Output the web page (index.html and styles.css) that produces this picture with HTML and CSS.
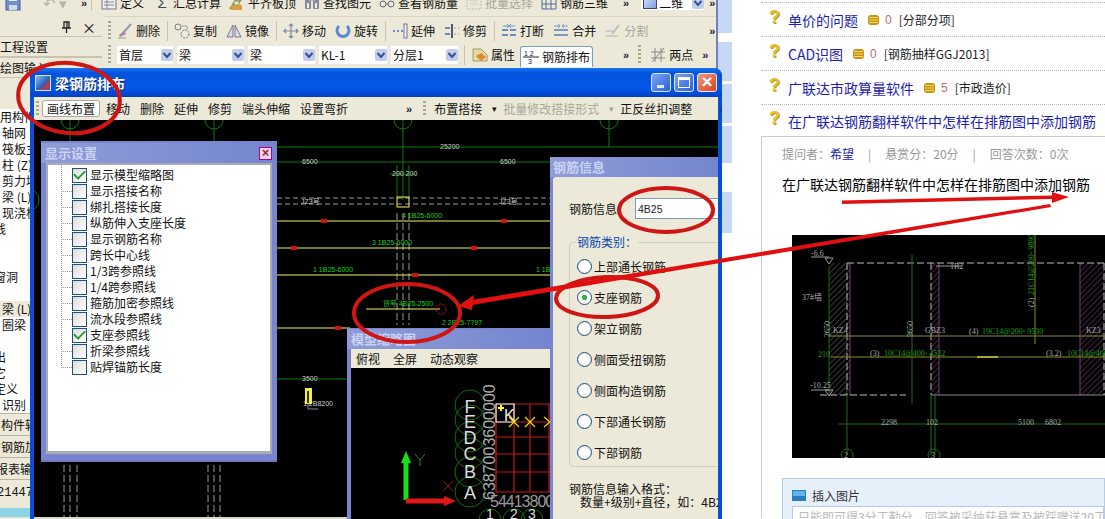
FILE: index.html
```html
<!DOCTYPE html>
<html lang="zh">
<head>
<meta charset="utf-8">
<title>梁钢筋排布</title>
<link rel="stylesheet" href="styles.css">
</head>
<body>
<svg class="defs" aria-hidden="true">
  <symbol id="i-save" viewBox="0 0 16 16"><rect x="1" y="0" width="14" height="15" fill="#6f8fd0" stroke="#4a5a90"/><rect x="4" y="0" width="8" height="6" fill="#eef"/><rect x="4" y="10" width="8" height="5" fill="#cdd"/></symbol>
  <symbol id="i-def" viewBox="0 0 16 16"><rect x="1" y="1" width="14" height="13" fill="#eee" stroke="#778"/><path d="M3 4h10M3 7h10M3 10h10M6 1v13" stroke="#889" fill="none"/></symbol>
  <symbol id="i-level" viewBox="0 0 16 16"><path d="M1 14l6-9 3 2 4-5" stroke="#887" fill="none" stroke-width="2"/><rect x="2" y="10" width="11" height="5" fill="#d9a040"/><rect x="5" y="6" width="5" height="4" fill="#f2e6a0" stroke="#997"/></symbol>
  <symbol id="i-find" viewBox="0 0 16 16"><rect x="1" y="4" width="6" height="10" fill="#889" rx="1"/><rect x="9" y="4" width="6" height="10" fill="#889" rx="1"/><rect x="5" y="1" width="6" height="5" fill="#aab"/><rect x="3" y="8" width="2" height="5" fill="#eee"/><rect x="11" y="8" width="2" height="5" fill="#eee"/></symbol>
  <symbol id="i-glass" viewBox="0 0 16 16"><circle cx="4" cy="9" r="3" fill="none" stroke="#667"/><circle cx="12" cy="9" r="3" fill="none" stroke="#667"/><path d="M7 9h2" stroke="#667"/></symbol>
  <symbol id="i-batch" viewBox="0 0 16 16"><rect x="1" y="2" width="14" height="12" fill="none" stroke="#bbb" stroke-dasharray="2 1"/><path d="M4 6h8M4 9h8" stroke="#ccc"/></symbol>
  <symbol id="i-3d" viewBox="0 0 16 16"><path d="M1 4h14v10H1zM5 4v10M10 4v10M1 9h14M3 1h12" fill="none" stroke="#556a9a"/></symbol>
  <symbol id="i-del" viewBox="0 0 16 16"><path d="M14 1L6 10" stroke="#99a" stroke-width="2"/><path d="M7 8l-5 4 1 2 6-3z" fill="#b080a0"/><path d="M1 15h8" stroke="#999"/></symbol>
  <symbol id="i-copy" viewBox="0 0 16 16"><circle cx="4" cy="4" r="3" fill="none" stroke="#778"/><circle cx="11" cy="11" r="4" fill="none" stroke="#778" stroke-dasharray="2 1"/><path d="M8 3h5v4" fill="none" stroke="#99a"/></symbol>
  <symbol id="i-mirror" viewBox="0 0 16 16"><path d="M7 2v12H1zM9 2v12h6z" fill="#dde" stroke="#778"/></symbol>
  <symbol id="i-move" viewBox="0 0 16 16"><path d="M8 1v14M1 8h14M6 3l2-2 2 2M6 13l2 2 2-2M3 6L1 8l2 2M13 6l2 2-2 2" fill="none" stroke="#7888a8" stroke-width="1.2"/></symbol>
  <symbol id="i-rot" viewBox="0 0 16 16"><path d="M4 3a6 6 0 1 0 8 0" fill="none" stroke="#5a88cc" stroke-width="3"/></symbol>
  <symbol id="i-ext" viewBox="0 0 16 16"><path d="M1 8h2M5 8h2M9 8h2" stroke="#6a8ac0" stroke-width="2"/><rect x="12" y="1" width="3" height="14" fill="#eef" stroke="#778"/></symbol>
  <symbol id="i-trim" viewBox="0 0 16 16"><path d="M1 5h5M1 11h5" stroke="#6a8ac0" stroke-width="2"/><path d="M8 1v14" stroke="#556" stroke-width="2"/><path d="M10 5h2M14 5h1M10 11h2M14 11h1" stroke="#99b"/></symbol>
  <symbol id="i-brk" viewBox="0 0 16 16"><path d="M1 12h6M9 12h6M1 7h6M9 7h6" stroke="#6a8ac0" stroke-width="2"/><path d="M2 3h5M6 1l2 2-2 2M14 3H9M10 1L8 3l2 2" fill="none" stroke="#6a9ad0"/></symbol>
  <symbol id="i-mrg" viewBox="0 0 16 16"><path d="M1 12h14M1 7h14" stroke="#7a9ac0" stroke-width="2"/><path d="M1 3h5M5 1l2 2-2 2M15 3h-5M11 1L9 3l2 2" fill="none" stroke="#7a9ad0"/></symbol>
  <symbol id="i-split" viewBox="0 0 16 16"><path d="M1 13h12M1 8h7" stroke="#ccc" stroke-width="2"/><path d="M14 2L7 11" stroke="#bbb" stroke-width="2"/></symbol>
  <symbol id="i-prop" viewBox="0 0 16 16"><path d="M1 2h8l6 6v6H1z" fill="#e8d8a0" stroke="#aa9966"/><path d="M4 9l5-3 5 4-5 4z" fill="#d88a30"/></symbol>
  <symbol id="i-two" viewBox="0 0 16 16"><path d="M1 5h14M1 11h14M5 1v14M11 1v14M2 15L14 1" fill="none" stroke="#8a8a8a"/></symbol>
  <symbol id="i-coin" viewBox="0 0 11 10"><rect x="0" y="0" width="11" height="10" rx="3" fill="#c79410"/><path d="M1 2.500h9M1 5h9M1 7.500h9" stroke="#f3dc72" stroke-width="1.2"/></symbol>
  <symbol id="i-arrow" viewBox="0 0 12 12"><rect width="12" height="12" rx="2" fill="#c0cdee"/><path d="M2.500 4L6 8l3.500-4" fill="none" stroke="#37508c" stroke-width="2"/></symbol>
  <symbol id="i-pin" viewBox="0 0 9 12"><path d="M2 1h5v6H2zM0 7h9M4.500 7v5M5 1v6" fill="none" stroke="#222" stroke-width="1.3"/></symbol>
</svg>

<div class="app">
  <div class="tb tb1">
    <svg class="ic"><use href="#i-save"/></svg>
    <span class="undo">↶ ▾</span>
    <span class="more more-a">»</span>
    <span class="sep sep-a"></span>
    <span class="it"><svg class="ic"><use href="#i-def"/></svg>定义</span>
    <span class="it it-s"><span class="ic sig">Σ</span>汇总计算</span>
    <span class="it"><svg class="ic"><use href="#i-level"/></svg>平齐板顶</span>
    <span class="it"><svg class="ic"><use href="#i-find"/></svg>查找图元</span>
    <span class="it"><svg class="ic"><use href="#i-glass"/></svg>查看钢筋量</span>
    <span class="it off"><svg class="ic"><use href="#i-batch"/></svg>批量选择</span>
    <span class="it"><svg class="ic"><use href="#i-3d"/></svg>钢筋三维</span>
    <span class="more more-b">»</span>
    <span class="combo combo-2d"><span class="swatch"></span>二维<svg class="arr"><use href="#i-arrow"/></svg></span>
    <span class="more">»</span>
  </div>
  <div class="main">
    <aside class="side">
      <div class="side-head"><svg class="pin"><use href="#i-pin"/></svg><span>×</span></div>
      <div class="side-tab">工程设置</div>
      <div class="side-tab">绘图输入</div>
      <div class="side-gap"></div>
      <ul class="tree">
        <li>用构件</li><li class="in">轴网</li><li class="in">筏板主</li><li class="in">柱 (Z)</li>
        <li class="in">剪力墙</li><li class="in">梁 (L)</li><li class="in">现浇板</li><li class="cut">线</li>
        <li></li><li></li><li class="cut">窗洞</li><li></li>
        <li class="in hi">梁 (L)</li><li class="in">圈梁</li><li></li>
        <li class="cut">出</li><li class="cut">它</li><li class="cut">定义</li><li class="in">识别</li>
      </ul>
      <div class="side-btn">构件转</div>
      <div class="side-btn">钢筋加</div>
      <div class="side-btn cut">报表输</div>
      <div class="side-btn num">21447</div>
      <div class="side-teal"></div>
    </aside>
    <div class="bars">
      <div class="tb tb2">
        <span class="grip"></span>
        <span class="it"><svg class="ic"><use href="#i-del"/></svg>删除</span><span class="sep"></span>
        <span class="it"><svg class="ic"><use href="#i-copy"/></svg>复制</span>
        <span class="it"><svg class="ic"><use href="#i-mirror"/></svg>镜像</span><span class="sep"></span>
        <span class="it"><svg class="ic"><use href="#i-move"/></svg>移动</span>
        <span class="it"><svg class="ic"><use href="#i-rot"/></svg>旋转</span><span class="sep"></span>
        <span class="it"><svg class="ic"><use href="#i-ext"/></svg>延伸</span>
        <span class="it"><svg class="ic"><use href="#i-trim"/></svg>修剪</span><span class="sep"></span>
        <span class="it"><svg class="ic"><use href="#i-brk"/></svg>打断</span>
        <span class="it"><svg class="ic"><use href="#i-mrg"/></svg>合并</span>
        <span class="it off"><svg class="ic"><use href="#i-split"/></svg>分割</span>
        <span class="more more-end">»</span>
      </div>
      <div class="tb tb3">
        <span class="grip"></span>
        <span class="combo c1">首层<svg class="arr"><use href="#i-arrow"/></svg></span>
        <span class="combo c2">梁<svg class="arr"><use href="#i-arrow"/></svg></span>
        <span class="combo c2">梁<svg class="arr"><use href="#i-arrow"/></svg></span>
        <span class="combo c2 c-kl">KL-1<svg class="arr"><use href="#i-arrow"/></svg></span>
        <span class="combo c2">分层1<svg class="arr"><use href="#i-arrow"/></svg></span>
        <span class="sep sep-c"></span>
        <span class="it it-p"><svg class="ic"><use href="#i-prop"/></svg>属性</span>
        <span class="it active"><svg class="ic" viewBox="0 0 16 16"><text x="1" y="7" class="frac">1 2</text><path d="M0 8h16" stroke="#223"/><text x="5" y="15" class="frac">3</text></svg>钢筋排布</span>
        <span class="more more-c">»</span>
        <span class="grip grip-c"></span>
        <span class="it"><svg class="ic"><use href="#i-two"/></svg>两点</span>
        <span class="more">»</span>
      </div>
    </div>
  </div>
</div>

<div class="strip"></div>

<main class="web">
  <div class="q-row"><span class="mark">?</span><a class="q-link">单价的问题</a><svg class="coin"><use href="#i-coin"/></svg><span class="pts">0</span><span class="tag">[分部分项]</span></div>
  <div class="q-row"><span class="mark">?</span><a class="q-link">CAD识图</a><svg class="coin"><use href="#i-coin"/></svg><span class="pts">0</span><span class="tag">[钢筋抽样GGJ2013]</span></div>
  <div class="q-row"><span class="mark">?</span><a class="q-link">广联达市政算量软件</a><svg class="coin"><use href="#i-coin"/></svg><span class="pts">5</span><span class="tag">[市政造价]</span></div>
  <div class="q-row q-last"><span class="mark">?</span><a class="q-link">在广联达钢筋翻样软件中怎样在排筋图中添加钢筋</a></div>
  <section class="q-box">
    <p class="meta">提问者：<b>希望</b><i>|</i>悬赏分：20分<i>|</i>回答次数：0次</p>
    <p class="q-text">在广联达钢筋翻样软件中怎样在排筋图中添加钢筋</p>
    <svg class="photo" viewBox="792 236 313 223" width="313" height="223">
      <defs>
        <pattern id="hatch" width="4" height="4" patternUnits="userSpaceOnUse" patternTransform="rotate(45)"><path d="M0 0v4" stroke="#5c5c5c" stroke-width="1.2"/></pattern>
        <pattern id="hatchp" width="4" height="4" patternUnits="userSpaceOnUse" patternTransform="rotate(45)"><path d="M0 0v4" stroke="#6a3c6a" stroke-width="1.2"/></pattern>
      </defs>
      <rect x="829" y="264" width="21" height="132" fill="url(#hatch)"/>
      <rect x="931" y="264" width="8" height="132" fill="url(#hatchp)"/>
      <rect x="1080" y="264" width="25" height="132" fill="url(#hatchp)"/>
      <path d="M850 264v132M939 264v132M1080 264v132" stroke="#7a3a7a"/>
      <path d="M847 264h258M847 264v132M931 264v132M1104 264v132" stroke="#bbb" stroke-dasharray="7 3" fill="none"/>
      <path d="M820 396h86" stroke="#bbb" stroke-dasharray="7 3"/>
      <path d="M931 396h174" stroke="#888"/>
      <path d="M912 256v149M829 268v128" stroke="#1d6a1d"/>
      <path d="M1035 236v109" stroke="#8a8a1a"/>
      <path d="M830 337h275M831 358h274" stroke="#8a8a2a"/>
      <path d="M977 358h21" stroke="#a8a830" stroke-width="2"/>
      <path d="M838 425h267M847 396v60M931 396v60M935 396v60" stroke="#1d6a1d"/>
      <circle cx="847" cy="456" r="6" fill="none" stroke="#1d6a1d"/>
      <circle cx="934" cy="456" r="6" fill="none" stroke="#1d6a1d"/>
      <path d="M811 258h18M825 259l4 6 4-6zM811 391h18M825 391l4 6 4-6zM936 267h26" stroke="#999" fill="none"/>
      <g class="cad-w">
        <text x="811" y="257">-6.6</text><text x="802" y="301">37#墙</text>
        <text x="833" y="334">KZ4</text><text x="925" y="334">GBZ3</text><text x="1086" y="334">KZ3</text>
        <text x="950" y="270">1B2</text><text x="810" y="389">-10.25</text>
        <text x="881" y="426">2298</text><text x="926" y="426">102</text><text x="1018" y="426">5100</text><text x="1045" y="426">6802</text>
        <text transform="translate(830 338) rotate(-90)">2650</text>
        <text transform="translate(913 338) rotate(-90)">3650</text>
        <text x="969" y="335">(4)</text><text x="870" y="357">(3)</text><text x="1046" y="357">(3.2)</text>
        <text x="844" y="459">2</text><text x="931" y="459">3</text>
        <text transform="translate(1034 308) rotate(-90)">(2)</text>
      </g>
      <g class="cad-g">
        <text x="982" y="335">19C14@200- 9530</text><text x="884" y="357">10C14@400- 4522</text>
        <text x="1067" y="357">10C14@400-</text><text x="818" y="358">210</text>
        <text transform="translate(1034 296) rotate(-90)">21C14@200- 9890</text>
      </g>
    </svg>
    <div class="insert">
      <div class="insert-title"><span class="pic"></span>插入图片</div>
      <div class="insert-input">只能即可得3分工勤分，回答被采纳获悬赏及被踩赠送20工勤分</div>
    </div>
  </section>
</main>

<div class="window">
  <header class="w-title">
    <span class="w-ico"></span><span class="w-name">梁钢筋排布</span>
    <span class="w-btns"><span class="wb min"></span><span class="wb max"></span><span class="wb close">×</span></span>
  </header>
  <div class="w-tools">
    <span class="grip"></span>
    <span class="tool active">画线布置</span><span class="tool">移动</span><span class="tool">删除</span><span class="tool">延伸</span><span class="tool">修剪</span><span class="tool">端头伸缩</span><span class="tool">设置弯折</span>
    <span class="more more-w1">»</span><span class="grip grip-w"></span>
    <span class="tool">布置搭接</span><span class="drop">▾</span><span class="tool off">批量修改搭接形式</span><span class="drop off">▾</span><span class="tool">正反丝扣调整</span>
    <span class="more more-w2">»</span>
  </div>
  <div class="w-canvas">
    <svg class="cad" viewBox="34 120 684 397" width="684" height="397">
      <g class="g-line">
        <path d="M41 147H718M41 162H718M403 120V200M70 120V142M214 120V142M609 120V147M390 174H416M397 165V197M409 165V197M277 379H347"/>
        <circle cx="70" cy="120" r="9"/><circle cx="214" cy="120" r="9"/><circle cx="403" cy="120" r="9"/><circle cx="609" cy="120" r="9"/><circle cx="28" cy="200" r="11"/>
      </g>
      <path class="dash" d="M277 198H550M277 204H550"/>
      <path class="dash2" d="M397 213V325M403 213V325M409 213V325M64 465V519M70 465V519M77 465V519M208 465V519M214 465V519M220 465V519"/>
      <path class="y-line" d="M277 221H550M277 248H550M277 275H550M277 328H350M366 309H440"/>
      <rect class="y-box" x="397" y="197" width="12" height="10"/>
      <g class="red-sq"><rect x="321" y="219" width="6" height="4"/><rect x="501" y="219" width="6" height="4"/><rect x="291" y="246" width="6" height="4"/><rect x="471" y="246" width="6" height="4"/><rect x="412" y="273" width="6" height="4"/><rect x="335" y="326" width="6" height="4"/></g>
      <circle class="red-c" cx="441" cy="309" r="5"/>
      <g class="t-w"><text x="440" y="149">25200</text><text x="302" y="164">6500</text><text x="500" y="164">6500</text><text x="392" y="176">200 200</text><text x="301" y="204">JZ3号</text><text x="499" y="204">JZ3号</text><text x="302" y="381">3500</text><text x="303" y="406">1.2B8200</text></g>
      <g class="t-g"><text x="402" y="218">4 1B25-6000</text><text x="372" y="245">3 1B25-6000</text><text x="313" y="272">1 1B25-6000</text><text x="536" y="272">1 1B25-6000</text><text x="383" y="306">货号 4B25-2500</text><text x="442" y="325">2 2B25-7797</text></g>
      <rect class="yb" x="305" y="388" width="7" height="16"/><path d="M308 391v12" stroke="#333" stroke-width="2"/>
      <path d="M308 404v5h10" stroke="#888" fill="none"/>
    </svg>
  </div>
  <div class="w-foot"></div>

  <section class="panel p-show">
    <h2>显示设置<span class="p-x">×</span></h2>
    <ul class="checks">
      <li class="on">显示模型缩略图</li><li>显示搭接名称</li><li>绑扎搭接长度</li><li>纵筋伸入支座长度</li><li>显示钢筋名称</li><li>跨长中心线</li><li>1/3跨参照线</li><li>1/4跨参照线</li><li>箍筋加密参照线</li><li>流水段参照线</li><li class="on">支座参照线</li><li>折梁参照线</li><li>贴焊锚筋长度</li>
    </ul>
  </section>

  <section class="panel p-model">
    <h2>模型缩略图</h2>
    <div class="m-menu"><span>俯视</span><span>全屏</span><span>动态观察</span></div>
    <svg class="m-view" viewBox="351 368 199 151" width="199" height="151">
      <path d="M496 404H550M496 422H550M496 437H550M496 454H550M496 472H550M496 492H550M496 404V492M514 404V492M530 404V492M549 404V492" stroke="#c81818" fill="none" stroke-width="1.2"/>
      <path d="M496 404h18v18h-18z" fill="none" stroke="#eee" stroke-width="1.2"/>
      <path d="M498 408h6M501 405v6" stroke="#ff0" stroke-width="2"/>
      <text class="mk" x="504" y="421">K</text>
      <path d="M509 417l10 10M519 417l-10 10M525 417l10 10M535 417l-10 10M544 417l6 5-6 5" stroke="#e8e020" fill="none" stroke-width="1.2"/>
      <g class="m-circ"><circle cx="470" cy="405" r="15"/><circle cx="470" cy="420" r="15"/><circle cx="470" cy="437" r="15"/><circle cx="470" cy="453" r="15"/><circle cx="470" cy="472" r="15"/><circle cx="470" cy="492" r="15"/><circle cx="490" cy="520" r="11"/><circle cx="514" cy="520" r="11"/><circle cx="532" cy="520" r="11"/></g>
      <g class="m-let"><text x="470" y="413">F</text><text x="470" y="428">E</text><text x="470" y="444">D</text><text x="470" y="460">C</text><text x="470" y="478">B</text><text x="470" y="499">A</text><text class="sm" x="490" y="519">1</text><text class="sm" x="514" y="519">2</text><text class="sm" x="532" y="519">3</text></g>
      <text class="m-num" transform="translate(495 500) rotate(-90)">6387003600000</text>
      <text class="m-num2" x="490" y="507">5441380036000</text>
      <path d="M406 500V462" stroke="#18e018" stroke-width="5"/><path d="M406 451l-5 12h10z" fill="#18e018"/>
      <path d="M406 501H444" stroke="#e01818" stroke-width="5"/><path d="M456 501l-12-5v10z" fill="#e01818"/>
      <path d="M415 454l5 6 5-6M420 460v6" stroke="#148a14" fill="none"/>
      <path d="M443 481l10 10M453 481l-10 10" stroke="#8a1414"/>
    </svg>
  </section>

  <section class="panel p-steel">
    <h2>钢筋信息</h2>
    <div class="s-body">
      <label class="s-field">钢筋信息：<input class="s-input" value="4B25" readonly></label>
      <fieldset class="s-group">
        <legend>钢筋类别：</legend>
        <div class="radio">上部通长钢筋</div>
        <div class="radio on">支座钢筋</div>
        <div class="radio">架立钢筋</div>
        <div class="radio">侧面受扭钢筋</div>
        <div class="radio">侧面构造钢筋</div>
        <div class="radio">下部通长钢筋</div>
        <div class="radio">下部钢筋</div>
      </fieldset>
      <p class="s-help">钢筋信息输入格式：<br><span>数量+级别+直径，如：4B25</span></p>
    </div>
  </section>
</div>

<svg class="ink" viewBox="0 0 1105 519" width="1105" height="519" aria-hidden="true">
  <g class="ink-ring">
    <ellipse cx="69" cy="98" rx="51" ry="35" transform="rotate(6 69 98)"/>
    <ellipse cx="666" cy="210" rx="47" ry="22"/>
    <ellipse cx="607" cy="297" rx="51" ry="20" transform="rotate(-2 607 297)"/>
    <ellipse cx="407" cy="313" rx="53" ry="29"/>
  </g>
  <path class="ink-fill" d="M1050 204L472 300V305L1051 207z"/>
  <path class="ink-fill" d="M458 306L474 295L472 310z"/>
  <path class="ink-fill" d="M842 200.500L1052 195.500V192L1069 197L1052 203V199L842 204z"/>
</svg>
</body>
</html>
```

FILE: styles.css
```css
* { box-sizing: border-box; }
html, body { margin: 0; height: 519px; overflow: hidden; }
body {
  position: relative;
  display: flex;
  width: 1105px;
  background: #fff;
  font: 12px/16px "Noto Sans CJK SC", "Liberation Sans", sans-serif;
  color: #111;
}
.defs { position: absolute; width: 0; height: 0; }

/* desktop application behind the dialog */
.app { width: 716px; flex: none; background: #ece9d8; height: 519px; display: flex; flex-direction: column; }
.strip {
  width: 16px; flex: none; height: 519px;
  border-left: 2px solid #6f80c8;
  background: linear-gradient(#c6d8f6 0 33px, #fff 33px 42px, #c6d8f6 42px 81px, #fff 81px 84px, #c6d8f6 84px 123px, #fff 123px 126px, #c6d8f6 126px 163px, #fff 163px, #fff 192px, #c6d8f6 192px 233px, #fff 233px);
}
.tb { display: flex; align-items: center; white-space: nowrap; }
.tb1 { height: 16px; padding: 0 0 10px 5px; border-bottom: 0; }
.main { display: flex; flex: 1; min-height: 0; }
.bars { flex: 1; padding-left: 3px; }
.tb2 { height: 28px; padding: 1px 0 0 3px; border-top: 1px solid #d8d4c0; }
.tb3 { height: 22px; padding-left: 3px; }

.ic { width: 16px; height: 16px; flex: none; margin-right: 3px; display: inline-block; }
.it { display: inline-flex; align-items: center; margin-right: 9px; }
.tb1 .it { margin-right: 8px; }
.tb1 .it-s { margin-left: 2px; }
.off { color: #a9a79a; }
.sig { font: 15px/16px "Liberation Sans", sans-serif; text-align: center; color: #445; }
.undo { margin-left: 19px; color: #b5b3a8; font-size: 15px; width: 38px; }
.more { font: bold 11px/12px "Liberation Sans", sans-serif; color: #223; }
.more-a { margin-left: 0; width: 10px; }
.more-b { margin: 0 12px 0 7px; }
.more-c { margin: 0 9px 0 30px; }
.more-end { margin-left: 52px; }
.sep { width: 1px; height: 20px; background: #c8c4b0; margin: 0 6px 0 -2px; }
.sep-a { margin: 0 9px 0 0; height: 16px; }
.sep-c { margin: 0 7px 0 2px; }
.grip { width: 3px; height: 20px; margin-right: 6px; flex: none; background: repeating-linear-gradient(#a9a696 0 2px, transparent 2px 4px); }
.grip-c { margin-right: 9px; }
.combo { display: inline-flex; align-items: center; justify-content: space-between; background: #fff; height: 18px; padding: 0 0 0 2px; flex: none; }
.arr { width: 12px; height: 12px; flex: none; }
.c1 { width: 56px; margin-right: 4px; }
.c2 { width: 67px; margin-right: 4px; }
.c-kl { width: 68px; }
.combo-2d { width: 63px; height: 14px; margin-right: 5px; justify-content: flex-start; gap: 2px; }
.combo-2d .arr { margin-left: 7px; }
.swatch { width: 15px; height: 12px; background: linear-gradient(135deg, #cfe0ff, #7f9fe0); border: 1px solid #446; }
.it.active { background: #fff; border: 1px solid #7f9db9; border-bottom: 0; border-radius: 3px 3px 0 0; height: 21px; padding: 0 2px; margin: 3px 0 0; }
.it-p { margin-right: 5px; }
.frac { font: 7px "Liberation Sans", sans-serif; fill: #113; }

/* side pane */
.side { width: 102px; flex: none; display: flex; flex-direction: column; }
.side-head { height: 20px; display: flex; justify-content: flex-end; align-items: center; gap: 11px; padding: 2px 6px 0 0; font-size: 14px; }
.pin { width: 9px; height: 12px; }
.side-tab { height: 21px; line-height: 20px; border: 1px solid #c8c4b0; border-width: 1px 0; font-size: 12px; }
.side-gap { height: 31px; }
.tree { list-style: none; margin: 0; padding: 0; height: 304px; background: #fff; font-size: 12px; overflow: hidden; }
.tree li { height: 16px; line-height: 16px; white-space: nowrap; }
.tree .in { text-indent: 2px; }
.tree .cut { text-indent: -6px; }
.tree .hi { background: #ece9d8; }
.side-btn { height: 22px; line-height: 22px; border-top: 1px solid #b8b4a0; text-indent: 1px; }
.side-btn.cut { text-indent: -4px; }
.side-btn.num { height: 29px; font: 12px/26px "Liberation Mono", monospace; text-indent: -3px; }
.side-teal { height: 9px; background: #8fd3e6; }

/* web page on the right */
.web { flex: 1; min-width: 0; padding: 2px 0 0 29px; overflow: hidden; }
.q-row {
  height: 34px; display: flex; align-items: center;
  border-top: 1px dotted #b4b4b4; white-space: nowrap; position: relative;
}
.q-last { height: 33px; }
.mark { width: 27px; padding-left: 8px; font: bold 18px/18px "Liberation Sans", sans-serif; color: #e3bf2a; text-shadow: 1px 1px 0 #b99a2a; margin-top: -6px; }
.q-link { font-size: 14px; color: #1d1db4; }
.coin { width: 11px; height: 10px; margin: 1px 6px 0 10px; }
.pts { font: 12px "Liberation Sans", sans-serif; color: #b0766a; margin-right: 7px; }
.tag { font-size: 12px; color: #222; }
.q-box { margin-top: -1px; height: 382px; border: 1px solid #ccc; border-width: 1px 0 0 1px; padding: 9px 0 0 20px; }
.q-box p { margin: 0; }
.meta { color: #999; height: 16px; }
.meta b { font-weight: 400; color: #1d1db4; }
.meta i { font-style: normal; margin: 0 14px; }
.q-box .q-text { font-size: 14px; line-height: 20px; color: #000; margin-top: 12px; }
.photo { display: block; margin: 41px 0 0 10px; background: #000; }
.photo text { font-size: 8px; font-family: "Liberation Serif", "Noto Sans CJK SC", serif; }
.cad-w text { fill: #aaa; }
.cad-g text { fill: #19a019; }
.insert { margin-top: 20px; height: 60px; background: #e6f0fb; border: 1px solid #b5cbe3; padding: 7px 0 0 9px; }
.insert-title { font-size: 12px; display: flex; align-items: center; gap: 6px; height: 19px; color: #333; }
.pic { width: 14px; height: 11px; background: linear-gradient(#5fb3e8 50%, #2a7fc0 50%); border: 1px solid #2a7fc0; }
.insert-input { height: 30px; background: #fff; border: 1px solid #b5cbe3; margin-top: 1px; color: #bbb; padding: 2px 5px; white-space: nowrap; overflow: hidden; }

/* dialog window */
.window {
  position: absolute; left: 30px; top: 68px; width: 692px; height: 451px;
  background: #0650d8; border-radius: 8px 8px 0 0; overflow: hidden;
}
.w-title {
  height: 29px; display: flex; align-items: center; padding: 0 5px;
  background: linear-gradient(#1a74f0, #0353dc 18%, #0259e6 70%, #0340c4);
}
.w-ico { width: 16px; height: 16px; background: linear-gradient(135deg, #8fc0f0, #2a62b8 55%, #d03040 75%, #2a62b8); border: 1px solid #cde; }
.w-name { margin-left: 4px; color: #fff; font-size: 14px; font-weight: 700; text-shadow: 1px 1px 0 #0a2a80; }
.w-btns { margin-left: auto; display: flex; gap: 3px; }
.wb { width: 20px; height: 19px; border: 1px solid #dfe8ff; border-radius: 3px; position: relative; background: linear-gradient(135deg, #7fa6f0, #2a5fd8); display: block; }
.min::after { content: ""; position: absolute; left: 5px; bottom: 3px; width: 7px; height: 3px; background: #dfe8ff; }
.max::after { content: ""; position: absolute; inset: 3px; border: 1px solid #fff; border-top-width: 3px; }
.close { background: linear-gradient(135deg, #ee9a80, #d8431c); color: #fff; font: bold 19px/16px "Liberation Sans", sans-serif; text-align: center; }
.w-tools {
  height: 23px; margin: 0 4px; background: #ece9d8; display: flex; align-items: center;
  padding-left: 2px; white-space: nowrap;
}
.w-tools .grip { height: 16px; margin-right: 3px; }
.tool { margin-right: 10px; }
.tool.active { margin: 0 6px 0 0; background: #fff; border: 1px solid #a8a8a0; border-radius: 3px; padding: 0 4px; height: 17px; line-height: 15px; }
.drop { margin: 0 6px 0 0; font-size: 9px; }
.more-w1 { margin: 0 11px 0 48px; }
.w-tools .grip-w { margin: 0 8px 0 0; }
.more-w2 { margin-left: 18px; }
.w-canvas { height: 397px; margin: 0 4px; background: #000; }
.w-foot { height: 2px; margin: 0 4px; background: #d8d8cc; }
.cad { display: block; }
.g-line { fill: none; stroke: #0b7d0b; }
.dash { stroke: #999; stroke-dasharray: 5 3; }
.dash2 { stroke: #999; stroke-dasharray: 7 3; }
.y-line { stroke: #f2f25a; }
.y-box { fill: none; stroke: #f2f25a; }
.red-sq rect { fill: #d01010; }
.red-c { fill: none; stroke: #d01010; stroke-dasharray: 2 1; }
.cad text { font-size: 7px; font-family: "Liberation Sans", "Noto Sans CJK SC", sans-serif; }
.t-w text { fill: #ccc; }
.t-g text { fill: #1bd01b; }
.yb { fill: #f2f23a; }

/* floating panels */
.panel { position: absolute; background: #7a85cf; overflow: hidden; }
.panel h2 { margin: 0; font-size: 13px; line-height: 20px; font-weight: 700; color: #c9d2f2; padding-left: 3px; position: relative; background: linear-gradient(90deg, #8f9cd8, #7485cf); }
.p-show { left: 11px; top: 73px; width: 236px; height: 321px; padding: 2px 5px 8px; border-bottom: 2px solid #6d78c4; }
.p-show h2 { margin: 0 -5px; padding-left: 4px; }
.p-x { position: absolute; right: 5px; top: 4px; width: 13px; height: 13px; background: #e8d8e8; border: 1px solid #a09; color: #a02040; font: bold 13px/10px "Liberation Sans", sans-serif; text-align: center; }
.checks { list-style: none; margin: 0; height: 291px; background: #fff; border: 2px solid #a8acb0; border-bottom-width: 3px; padding: 2px 0 0 24px; position: relative; }
.checks::before { content: ""; position: absolute; left: 13px; top: 0; height: 203px; border-left: 1px dotted #999; }
.checks li { height: 16px; line-height: 16px; display: flex; align-items: center; white-space: nowrap; position: relative; }
.checks li::before { content: ""; width: 13px; height: 13px; margin-right: 3px; border: 1px solid #1c5180; background: linear-gradient(135deg, #dcdcd6, #fff); flex: none; }
.checks li::after { content: ""; position: absolute; left: -11px; top: 8px; width: 11px; border-top: 1px dotted #999; }
.checks .on::after { left: 2px; top: 3px; width: 9px; height: 5px; border: 0 solid #2f9a3a; border-width: 0 0 2px 2px; transform: rotate(-45deg); }

.p-model { left: 317px; top: 260px; width: 204px; height: 191px; padding: 1px 1px 0 4px; }
.p-model h2 { margin: 0 -1px 0 -4px; padding-left: 4px; height: 20px; }
.m-menu { height: 19px; background: #ece9d8; display: flex; gap: 13px; padding-left: 5px; align-items: center; }
.m-view { display: block; background: #000; }
.m-circ circle { fill: none; stroke: #0f6f0f; }
.m-let text { font: 18px "Liberation Sans", sans-serif; fill: #ddd; text-anchor: middle; }
.m-let .sm { font-size: 14px; }
.mk { font: 16px "Liberation Sans", sans-serif; fill: #eee; }
.m-num { font: 16px "Liberation Sans", sans-serif; fill: #aaa; }
.m-num2 { font: 16px "Liberation Sans", sans-serif; fill: #999; letter-spacing: -1px; }

.p-steel { left: 520px; top: 89px; width: 168px; height: 362px; padding-left: 3px; }
.p-steel h2 { margin-left: -3px; height: 20px; line-height: 19px; }
.s-body { height: 342px; background: #ece9d8; padding: 21px 0 0 16px; width: 200px; border-radius: 3px 0 0 0; }
.s-field { display: flex; align-items: center; white-space: nowrap; height: 21px; }
.s-input { margin-left: 6px; width: 120px; height: 21px; border: 1px solid #7f9db9; background: #fff; font: 10.500px "Liberation Sans", sans-serif; padding: 0 2px; flex: none; color: #222; }
.s-group { margin: 16px 0 0; padding: 2px 0 0 7px; border: 1px solid #d0d0bf; border-radius: 4px; height: 232px; width: 180px; }
.s-group legend { color: #0a46b0; padding: 0 1px; margin-left: -1px; line-height: 14px; }
.radio { height: 31px; display: flex; align-items: center; white-space: nowrap; }
.radio::before { content: ""; width: 13px; height: 13px; margin-right: 2px; border: 1px solid #1c5180; border-radius: 50%; background: radial-gradient(circle, #fff 40%, #dcdcd6); flex: none; }
.radio.on::before { background: radial-gradient(circle, #3fae4a 28%, #fff 32%); }
.s-help { margin: 15px 0 0; line-height: 13px; white-space: nowrap; }
.s-help span { margin-left: 11px; }

/* red annotations over everything */
.ink { position: absolute; left: 0; top: 0; pointer-events: none; }
.ink-ring { fill: none; stroke: #d01515; stroke-width: 4; }
.ink-fill { fill: #e01010; }
```
